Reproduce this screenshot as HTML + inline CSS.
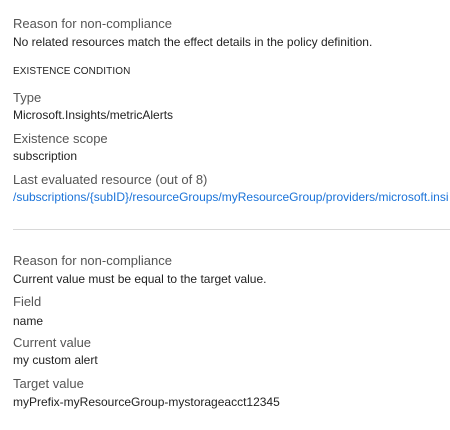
<!DOCTYPE html>
<html><head><meta charset="utf-8"><style>
html,body{margin:0;padding:0;background:#fff;width:450px;height:430px;overflow:hidden;position:relative;font-family:"Liberation Sans",sans-serif}
.t{position:absolute;left:13px;white-space:nowrap;line-height:16px}
.l{font-size:13px;color:#555}
.v{font-size:12px;color:#222}
.h{font-size:10px;color:#222;letter-spacing:0.1px}
.a{font-size:12px;color:#1a73d9}
.hr{position:absolute;left:13px;right:0;top:229px;height:1px;background:#d8d8d8}
</style></head><body>
<div class="t l" style="top:16px">Reason for non-compliance</div>
<div class="t v" style="top:34px">No related resources match the effect details in the policy definition.</div>
<div class="t h" style="top:64px">EXISTENCE CONDITION</div>
<div class="t l" style="top:90px">Type</div>
<div class="t v" style="top:107px">Microsoft.Insights/metricAlerts</div>
<div class="t l" style="top:131px">Existence scope</div>
<div class="t v" style="top:148px">subscription</div>
<div class="t l" style="top:172px">Last evaluated resource (out of 8)</div>
<div class="t a" style="top:189px">/subscriptions/{subID}/resourceGroups/myResourceGroup/providers/microsoft.insi</div>
<div class="hr"></div>
<div class="t l" style="top:253px">Reason for non-compliance</div>
<div class="t v" style="top:271px">Current value must be equal to the target value.</div>
<div class="t l" style="top:294px">Field</div>
<div class="t v" style="top:313px">name</div>
<div class="t l" style="top:335px">Current value</div>
<div class="t v" style="top:352px">my custom alert</div>
<div class="t l" style="top:376px">Target value</div>
<div class="t v" style="top:394px">myPrefix-myResourceGroup-mystorageacct12345</div>
</body></html>
